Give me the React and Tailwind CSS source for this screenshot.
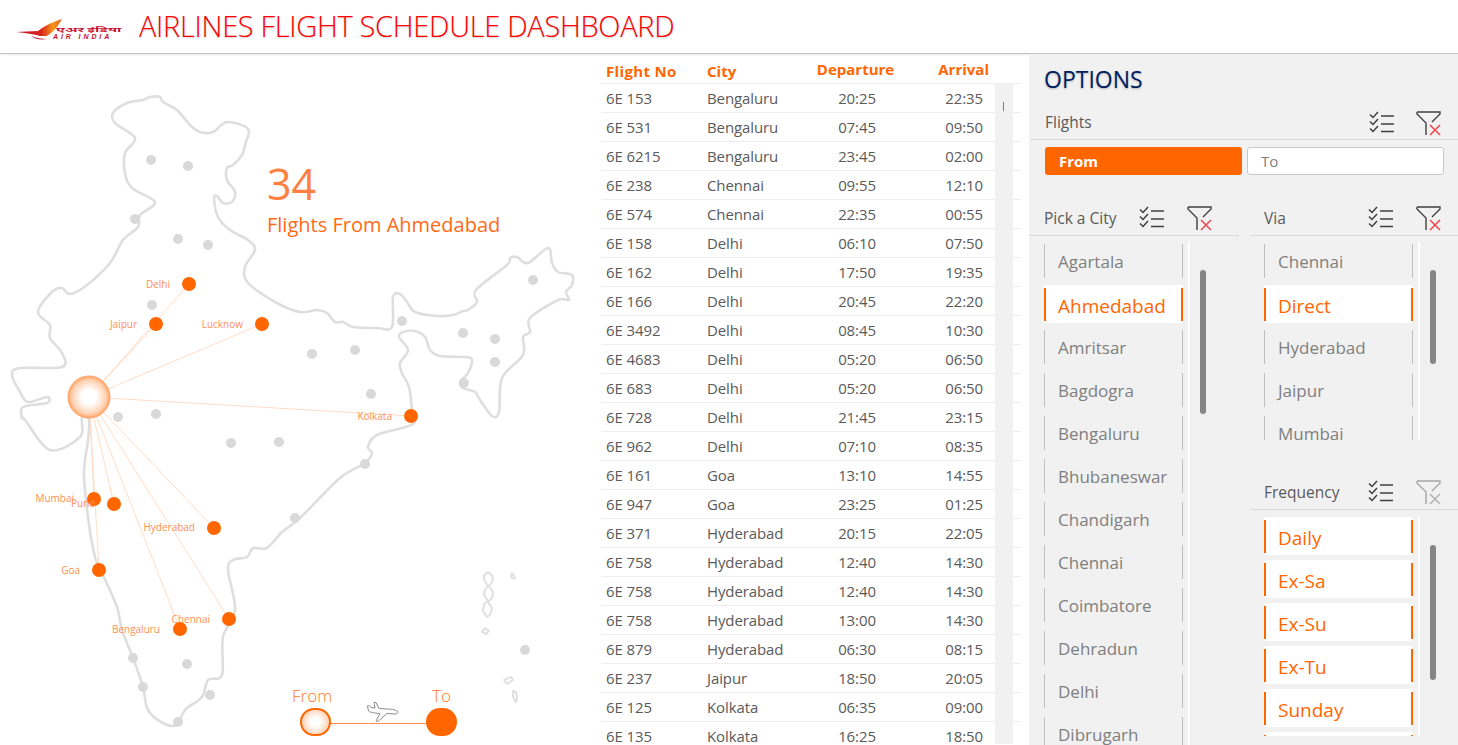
import React from "react";

const flights = [
  ["6E 153","Bengaluru","20:25","22:35"],["6E 531","Bengaluru","07:45","09:50"],["6E 6215","Bengaluru","23:45","02:00"],
  ["6E 238","Chennai","09:55","12:10"],["6E 574","Chennai","22:35","00:55"],["6E 158","Delhi","06:10","07:50"],
  ["6E 162","Delhi","17:50","19:35"],["6E 166","Delhi","20:45","22:20"],["6E 3492","Delhi","08:45","10:30"],
  ["6E 4683","Delhi","05:20","06:50"],["6E 683","Delhi","05:20","06:50"],["6E 728","Delhi","21:45","23:15"],
  ["6E 962","Delhi","07:10","08:35"],["6E 161","Goa","13:10","14:55"],["6E 947","Goa","23:25","01:25"],
  ["6E 371","Hyderabad","20:15","22:05"],["6E 758","Hyderabad","12:40","14:30"],["6E 758","Hyderabad","12:40","14:30"],
  ["6E 758","Hyderabad","13:00","14:30"],["6E 879","Hyderabad","06:30","08:15"],["6E 237","Jaipur","18:50","20:05"],
  ["6E 125","Kolkata","06:35","09:00"],["6E 135","Kolkata","16:25","18:50"],
];

const outline = [
  [150,97],[160,97],[163,102],[177,110],[190,125],[200,132],[213,132],[227,122],[248,129],[245,145],[242,155],[233,165],[227,168],[227,180],[235,192],[232,202],[223,203],[217,196],[214,198],[218,217],[230,230],[248,240],[255,250],[245,267],[248,283],[277,303],[300,312],
  [317,310],[327,313],[335,322],[343,322],[353,327],[377,328],[392,327],[393,297],[400,294],[407,302],[415,312],[437,316],[453,315],[463,311],[468,310],[477,302],[476,290],[507,265],[510,258],[517,257],[528,263],[548,248],[552,263],[558,272],[572,275],[572,285],[566,292],[569,300],[558,300],[530,318],[530,332],[523,337],[523,355],[502,378],[499,412],[492,416],[480,400],[475,392],[463,388],[460,382],[468,373],[472,360],[465,357],[440,356],[430,350],[425,337],[415,331],[403,332],[399,337],[408,350],[400,363],[402,373],[409,387],[412,410],[413,424],[377,435],[368,447],[372,453],[365,463],[340,478],[300,518],
  [282,532],[267,548],[253,548],[247,557],[233,560],[228,570],[235,610],[223,637],[222,675],[208,680],[202,697],[185,710],[177,725],[163,723],[148,710],[143,687],[133,658],[122,630],[117,607],[103,575],[95,557],[88,517],[84,473],[88,440],[89,420],[82,418],[80,437],[50,450],[25,420],[22,418],[23,407],[47,403],[47,397],[28,402],[20,392],[12,375],[20,368],[62,367],[62,353],[50,338],[50,325],[38,312],[52,292],[62,288],[70,294],[87,285],[110,263],[123,240],[138,227],[140,215],[155,202],[132,188],[125,173],[125,153],[135,138],[115,123],[113,113],[127,103],[143,100],
];

function smooth(pts, closed = true) {
  const n = pts.length;
  let d = `M${pts[0][0]} ${pts[0][1]}`;
  for (let i = 0; i < n; i++) {
    const p0 = pts[(i - 1 + n) % n], p1 = pts[i], p2 = pts[(i + 1) % n], p3 = pts[(i + 2) % n];
    const c1 = [p1[0] + (p2[0] - p0[0]) / 6, p1[1] + (p2[1] - p0[1]) / 6];
    const c2 = [p2[0] - (p3[0] - p1[0]) / 6, p2[1] - (p3[1] - p1[1]) / 6];
    d += ` C${c1[0].toFixed(1)} ${c1[1].toFixed(1)} ${c2[0].toFixed(1)} ${c2[1].toFixed(1)} ${p2[0]} ${p2[1]}`;
  }
  return d + (closed ? " Z" : "");
}

const dots = [[151,160],[188,166],[135,219],[178,239],[208,245],[152,305],[118,417],[156,414],[231,443],[279,442],[312,354],[355,350],[371,394],[402,321],[463,333],[495,339],[495,362],[464,383],[533,280],[365,464],[295,518],[133,658],[143,687],[187,664],[210,695],[178,722],[525,650]];

const cities = [
  ["Delhi",189,284,170,288],["Jaipur",156,324,137,328],["Lucknow",262,324,243,328],["Kolkata",411,416,392,420],
  ["Mumbai",94,499,74,502],["Pune",114,504,95,507],["Hyderabad",214,528,195,531],["Goa",99,570,80,574],
  ["Chennai",229,619,210,623],["Bengaluru",180,629,160,633],
];

const islands = [
  "M488 572 L492 575 L493 581 L489 586 L493 592 L492 598 L488 602 L492 608 L490 615 L487 617 L483 611 L484 604 L488 601 L484 595 L485 590 L488 586 L484 580 L484 575 Z",
  "M512 573 L515 577 L514 579 L511 577 Z",
  "M485 628 L489 631 L486 634 L482 632 Z",
  "M504 680 L511 677 L513 680 L507 684 Z",
  "M513 691 L516 692 L517 698 L516 702 L513 697 Z",
];

function IndiaMap() {
  return (
    <svg className="absolute left-0 top-0" width="600" height="691" viewBox="0 54 600 691">
      <defs>
        <radialGradient id="hub">
          <stop offset="0.35" stopColor="#ffffff" />
          <stop offset="0.8" stopColor="#ffd2b3" />
          <stop offset="1" stopColor="#ffa366" />
        </radialGradient>
      </defs>
      <path d={smooth(outline)} fill="none" stroke="#dedede" strokeWidth="2.6" strokeLinejoin="round" />
      {islands.map((d, i) => <path key={i} d={d} fill="none" stroke="#e0e0e0" strokeWidth="2" strokeLinejoin="round" />)}
      {dots.map(([x, y], i) => <circle key={i} cx={x} cy={y} r="5" fill="#d9d9d9" />)}
      {cities.map(([n, x, y]) => <line key={n} x1="89" y1="397" x2={x} y2={y} stroke="#ffdcc4" strokeWidth="1" />)}
      <circle cx="89" cy="397" r="21" fill="url(#hub)" stroke="#ffa366" strokeWidth="1" />
      {cities.map(([n, x, y, tx, ty]) => (
        <g key={n}>
          <circle cx={x} cy={y} r="7" fill="#ff6600" />
          <text x={tx} y={ty} textAnchor="end" fontSize="10" fill="#ff8f52">{n}</text>
        </g>
      ))}
    </svg>
  );
}

function Legend() {
  return (
    <div className="absolute left-[292px] top-[632px] w-[168px] h-[56px]">
      <span className="absolute left-0 top-[-1px] text-[17px] leading-[22px] font-light text-[#ff7a2e]">From</span>
      <span className="absolute left-[140px] top-[-1px] text-[17px] leading-[22px] font-light text-[#ff7a2e]">To</span>
      <div className="absolute left-[22px] top-[37px] w-[120px] h-px bg-[#ff8c4d]" />
      <div className="absolute left-[8px] top-[22px] w-[31px] h-[28px] rounded-full border-2 border-[#ff6600] bg-[radial-gradient(circle,#ffffff_25%,#ffd2b3_75%,#ff9955_100%)]" />
      <div className="absolute left-[134px] top-[22px] w-[31px] h-[28px] rounded-full bg-[#ff6600]" />
      <svg className="absolute left-[74px] top-[15px]" width="34" height="22" viewBox="366 701 34 22">
        <path d="M398 712 C397 710 392 709 387 709 L379 708.5 L376 702.5 L374 702.5 L375 708 L371 707.5 L368.5 705 L367.5 706 L368.5 711 C370 712.5 374 713 380 713.5 L376 721 L378 721.5 L387 713.5 L395 714 C397 714 398 713 398 712 Z" fill="#ffffff" stroke="#8c8c8c" strokeWidth="1" strokeLinejoin="round" />
      </svg>
    </div>
  );
}

function Logo() {
  return (
    <div className="relative w-[110px] h-[26px] shrink-0">
      <svg className="absolute left-0 top-0" width="50" height="26" viewBox="16 14 50 26">
        <defs>
          <linearGradient id="wing" x1="0" y1="0" x2="1" y2="0">
            <stop offset="0" stopColor="#c8102e" />
            <stop offset="0.55" stopColor="#d9261c" />
            <stop offset="0.8" stopColor="#f7941d" />
            <stop offset="1" stopColor="#e8601c" />
          </linearGradient>
        </defs>
        <path d="M16 32 L38 31 C44 26 52 22 62 19 C59 24 56 30 47 36 L40 36 C34 34 26 33 16 32 Z" fill="url(#wing)" />
        <path d="M31 36 C36 38 41 39 47 39 L42 39.5 C37 39.5 34 38 31 36 Z" fill="#c8102e" />
      </svg>
      <span className="absolute left-[40px] top-[11px] text-[7px] leading-[8px] font-bold text-[#c8102e] whitespace-nowrap origin-left scale-x-[2.1] font-['Noto_Sans_CJK_SC','Noto_Sans',sans-serif]">एअर इंडिया</span>
      <span className="absolute left-[37px] top-[19px] text-[7px] leading-[7px] font-extrabold italic tracking-[2.9px] text-[#c8102e] whitespace-nowrap font-['Liberation_Sans',sans-serif]">AIR INDIA</span>
    </div>
  );
}

function SelectAll() {
  return (
    <svg width="26" height="24" viewBox="0 0 26 24" fill="none" stroke="#404040" strokeWidth="1.5">
      <path d="M1 3.5 L4 6.5 L9 1" />
      <path d="M1 10.5 L4 13.5 L9 8" />
      <path d="M1 17.5 L4 20.5 L9 15" />
      <path d="M12 5 H25 M12 13 H25 M12 20.5 H25" />
    </svg>
  );
}

function ClearFilter({ off }) {
  const s = off ? "#a6a6a6" : "#404040";
  const x = off ? "#b3b3b3" : "#f0444c";
  return (
    <svg width="25" height="25" viewBox="0 0 25 25" fill="none" strokeWidth="1.4">
      <path d="M1 1 H24 V3 L16 11 M1 1 V3 L10 12 V24" stroke={s} />
      <path d="M14 14 L24 24 M24 14 L14 24" stroke={x} strokeWidth="1.5" />
    </svg>
  );
}

function SlicerHead({ label, off, gap, className }) {
  return (
    <div className={"flex items-center border-b border-[#d9d9d9] " + className}>
      <span className="text-[15.5px] leading-none text-[#595959]">{label}</span>
      <div className={"ml-auto flex items-center " + gap}>
        <SelectAll />
        <ClearFilter off={off} />
      </div>
    </div>
  );
}

function Item({ label, on, w }) {
  if (on) {
    return (
      <div className={"relative h-[38px] shrink-0 rounded-[2px] bg-white flex items-center pl-[14px] pt-[5px] text-[19px] text-[#ff6600] " + w}>
        <span className="absolute left-0 top-[3px] bottom-[2px] w-[2px] bg-[#ff6600]" />
        <span className="absolute right-0 top-[3px] bottom-[2px] w-[2px] bg-[#ff6600]" />
        {label}
      </div>
    );
  }
  return (
    <div className={"relative h-[38px] shrink-0 flex items-center pl-[14px] pt-[1px] text-[17px] text-[#7f7f7f] " + w}>
      <span className="absolute left-0 top-[2px] bottom-[2px] w-px bg-[#bfbfbf]" />
      <span className="absolute right-0 top-[2px] bottom-[2px] w-px bg-[#bfbfbf]" />
      {label}
    </div>
  );
}

function Slicer({ items, selected, height, thumbTop, thumbH, listW }) {
  return (
    <div className={"flex overflow-hidden " + height}>
      <div className={"flex flex-col gap-[5px] shrink-0 " + listW}>
        {items.map((t) => <Item key={t} label={t} on={selected.includes(t)} w="w-full" />)}
      </div>
      <div className="ml-[5px] w-[28px] pl-[10px] shrink-0 border-l-2 border-white bg-[#f0f0f0]">
        <div className={"w-[6px] rounded-full bg-[#858585] " + thumbTop + " " + thumbH} />
      </div>
    </div>
  );
}

export default function App() {
  return (
    <div className="w-[1458px] h-[745px] overflow-hidden bg-white font-['Open_Sans','Noto_Sans',sans-serif]">
      <header className="h-[54px] flex items-center pl-[16px] border-b border-[#c4c4c4] shadow-[0_1px_2px_rgba(0,0,0,0.08)]">
        <Logo />
        <h1 className="ml-[13px] mb-[2px] text-[29px] leading-none font-light tracking-[-0.32px] text-[#ff0000] whitespace-nowrap [text-shadow:0_1px_2px_rgba(0,0,0,0.2)]">
          AIRLINES FLIGHT SCHEDULE DASHBOARD
        </h1>
      </header>

      <main className="flex h-[691px] overflow-hidden">
        <section className="relative w-[601px] shrink-0">
          <IndiaMap />
          <div className="absolute left-[267px] top-[103px]">
            <div className="text-[43px] leading-[54px] font-normal text-[#ff8040]">34</div>
            <div className="text-[20px] leading-[28px] text-[#ff6a13] whitespace-nowrap">Flights From Ahmedabad</div>
          </div>
          <Legend />
        </section>

        <section className="w-[428px] shrink-0 text-[#5a5a5a]">
          <div className="grid grid-cols-[101px_100px_100px_93px] h-[29px] w-[394px] items-center text-[15px] font-bold text-[#ff6600]">
            <span className="pl-[5px] pt-[6px] tracking-[0.35px] whitespace-nowrap">Flight No</span>
            <span className="pl-[5px] pt-[6px]">City</span>
            <span className="text-center pt-[2px] pl-[7px] whitespace-nowrap">Departure</span>
            <span className="text-right pr-[6px] pt-[2px]">Arrival</span>
          </div>
          <div className="flex">
            <div className="w-[394px] shrink-0 border-t border-[#eeeeee]">
              {flights.map((r, i) => (
                <div key={i} className="grid grid-cols-[101px_100px_100px_93px] h-[29px] items-center border-b border-[#eeeeee] text-[15px] tracking-[-0.1px]">
                  <span className="pl-[5px]">{r[0]}</span>
                  <span className="pl-[5px]">{r[1]}</span>
                  <span className="text-center pl-[10px]">{r[2]}</span>
                  <span className="text-right pr-[12px]">{r[3]}</span>
                </div>
              ))}
            </div>
            <div className="w-[18px] h-[661px] shrink-0 bg-[#f1f1f1] pt-[19px]">
              <div className="ml-[8px] w-px h-[9px] bg-[#7f7f7f]" />
            </div>
            <div className="w-[8px] shrink-0 border-t border-[#eeeeee]">
              {flights.map((r, i) => <div key={i} className="h-[29px] border-b border-[#eeeeee]" />)}
            </div>
          </div>
        </section>

        <aside className="flex-1 bg-[#f1f1f1] min-w-0">
          <div className="pl-[15px] pt-[9px] h-[53px] text-[23px] leading-[32px] text-[#002060] [text-shadow:0_1px_2px_rgba(0,0,0,0.25)]">OPTIONS</div>
          <SlicerHead label="Flights" gap="gap-[21px]" className="h-[33px] ml-[2px] pl-[14px] pr-[17px]" />
          <div className="flex gap-[5px] pl-[16px] pt-[7px]">
            <div className="w-[197px] h-[28px] rounded-[3px] bg-[#ff6600] flex items-center pl-[14px] text-[15px] font-bold text-white">From</div>
            <div className="w-[197px] h-[28px] rounded-[3px] bg-white border border-[#c8c8c8] flex items-center pl-[13px] text-[15px] text-[#7f7f7f]">To</div>
          </div>
          <div className="flex pt-[14px]">
            <div className="w-[210px] shrink-0">
              <SlicerHead label="Pick a City" gap="gap-[22px]" className="h-[47px] pl-[14px] pr-[27px] pt-[12px] ml-[1px] [&>span]:mt-[2px]" />
              <div className="pl-[15px] pt-[6px]">
                <Slicer
                  items={["Agartala","Ahmedabad","Amritsar","Bagdogra","Bengaluru","Bhubaneswar","Chandigarh","Chennai","Coimbatore","Dehradun","Delhi","Dibrugarh"]}
                  selected={["Ahmedabad"]}
                  height="h-[520px]"
                  listW="w-[139px]"
                  thumbTop="mt-[28px]"
                  thumbH="h-[144px]"
                />
              </div>
            </div>
            <div className="ml-[11px] flex-1 min-w-0">
              <SlicerHead label="Via" gap="gap-[22px]" className="h-[47px] pl-[14px] pr-[17px] pt-[12px] [&>span]:mt-[2px]" />
              <div className="pl-[14px] pt-[6px]">
                <Slicer
                  items={["Chennai","Direct","Hyderabad","Jaipur","Mumbai"]}
                  selected={["Direct"]}
                  height="h-[198px]"
                  listW="w-[149px]"
                  thumbTop="mt-[28px]"
                  thumbH="h-[94px]"
                />
              </div>
              <SlicerHead label="Frequency" off gap="gap-[22px]" className="h-[47px] mt-[23px] pl-[14px] pr-[17px] pt-[12px] [&>span]:mt-[2px]" />
              <div className="pl-[14px] pt-[7px]">
                <Slicer
                  items={["Daily","Ex-Sa","Ex-Su","Ex-Tu","Sunday",""]}
                  selected={["Daily","Ex-Sa","Ex-Su","Ex-Tu","Sunday",""]}
                  height="h-[219px]"
                  listW="w-[149px]"
                  thumbTop="mt-[28px]"
                  thumbH="h-[135px]"
                />
              </div>
            </div>
          </div>
        </aside>
      </main>
    </div>
  );
}
